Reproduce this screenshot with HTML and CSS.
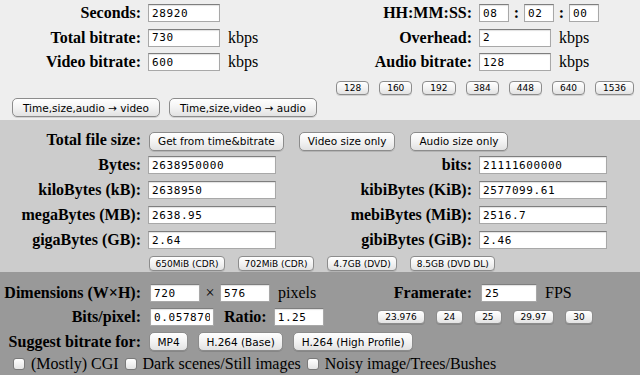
FILE: index.html
```html
<html>
    <link rel="stylesheet" href="styles.css">
    <head>
        <title>Bitrate calculator</title>
    </head>

    <body>
        <div class="sec sec-time">
            <label class="lbl" for="sec">Seconds:</label>
            <div class="cell"><input type="text" id="sec" class="in in-s" value="28920"></div>
            <label class="lbl" for="hh">HH:MM:SS:</label>
            <div class="cell">
                <input type="text" id="hh" class="in in-t" value="08">
                <span class="colon">:</span>
                <input type="text" id="mm" class="in in-t" value="02">
                <span class="colon">:</span>
                <input type="text" id="ss" class="in in-t" value="00">
            </div>

            <label class="lbl" for="total">Total bitrate:</label>
            <div class="cell"><input type="text" id="total" class="in in-s" value="730"><span class="unit">kbps</span></div>
            <label class="lbl" for="over">Overhead:</label>
            <div class="cell"><input type="text" id="over" class="in in-s" value="2"><span class="unit">kbps</span></div>

            <label class="lbl" for="video">Video bitrate:</label>
            <div class="cell"><input type="text" id="video" class="in in-s" value="600"><span class="unit">kbps</span></div>
            <label class="lbl" for="audio">Audio bitrate:</label>
            <div class="cell"><input type="text" id="audio" class="in in-s" value="128"><span class="unit">kbps</span></div>

            <div class="span2"></div>
            <div class="span2 presets">
                <button class="sbtn">128</button>
                <button class="sbtn">160</button>
                <button class="sbtn">192</button>
                <button class="sbtn">384</button>
                <button class="sbtn">448</button>
                <button class="sbtn">640</button>
                <button class="sbtn">1536</button>
            </div>

            <div class="span4 calc">
                <button class="btn wide">Time,size,audio &rarr; video</button>
                <button class="btn wide">Time,size,video &rarr; audio</button>
            </div>
        </div>

        <div class="sec sec-size">
            <div class="lbl">Total file size:</div>
            <div class="span3 getrow">
                <button class="btn">Get from time&amp;bitrate</button>
                <button class="btn">Video size only</button>
                <button class="btn">Audio size only</button>
            </div>

            <label class="lbl" for="b">Bytes:</label>
            <div class="cell"><input type="text" id="b" class="in in-l" value="2638950000"></div>
            <label class="lbl" for="bits">bits:</label>
            <div class="cell"><input type="text" id="bits" class="in in-l" value="21111600000"></div>

            <label class="lbl" for="kb">kiloBytes (kB):</label>
            <div class="cell"><input type="text" id="kb" class="in in-l" value="2638950"></div>
            <label class="lbl" for="kib">kibiBytes (KiB):</label>
            <div class="cell"><input type="text" id="kib" class="in in-l" value="2577099.61"></div>

            <label class="lbl" for="mb">megaBytes (MB):</label>
            <div class="cell"><input type="text" id="mb" class="in in-l" value="2638.95"></div>
            <label class="lbl" for="mib">mebiBytes (MiB):</label>
            <div class="cell"><input type="text" id="mib" class="in in-l" value="2516.7"></div>

            <label class="lbl" for="gb">gigaBytes (GB):</label>
            <div class="cell"><input type="text" id="gb" class="in in-l" value="2.64"></div>
            <label class="lbl" for="gib">gibiBytes (GiB):</label>
            <div class="cell"><input type="text" id="gib" class="in in-l" value="2.46"></div>

            <div></div>
            <div class="span3 media">
                <button class="sbtn tbtn">650MiB (CDR)</button>
                <button class="sbtn tbtn">702MiB (CDR)</button>
                <button class="sbtn tbtn">4.7GB (DVD)</button>
                <button class="sbtn tbtn">8.5GB (DVD DL)</button>
            </div>
        </div>

        <div class="sec sec-dim">
            <label class="lbl" for="w">Dimensions (W&times;H):</label>
            <div class="cell pad">
                <input type="text" id="w" class="in in-d" value="720">
                <span class="times">&times;</span>
                <input type="text" id="h" class="in in-d" value="576">
                <span class="unit">pixels</span>
            </div>
            <label class="lbl" for="fps">Framerate:</label>
            <div class="cell pad"><input type="text" id="fps" class="in in-f" value="25"><span class="unit">FPS</span></div>

            <label class="lbl" for="bpp">Bits/pixel:</label>
            <div class="cell pad">
                <input type="text" id="bpp" class="in in-b" value="0.05787037">
                <label class="lbl ratio" for="ratio">Ratio:</label>
                <input type="text" id="ratio" class="in in-d" value="1.25">
            </div>
            <div class="span2 fpsrow">
                <button class="sbtn">23.976</button>
                <button class="sbtn">24</button>
                <button class="sbtn">25</button>
                <button class="sbtn">29.97</button>
                <button class="sbtn">30</button>
            </div>

            <div class="lbl">Suggest bitrate for:</div>
            <div class="span3 suggest">
                <button class="btn">MP4</button>
                <button class="btn">H.264 (Base)</button>
                <button class="btn">H.264 (High Profile)</button>
            </div>

            <div class="span4 checks">
                <label class="chk"><input type="checkbox">(Mostly) CGI</label>
                <label class="chk"><input type="checkbox">Dark scenes/Still images</label>
                <label class="chk"><input type="checkbox">Noisy image/Trees/Bushes</label>
            </div>
        </div>
    </body>
</html>
```

FILE: styles.css
```css
body {
    margin: 0;
    background-color: white;
    color: black;
    font-family: "Liberation Serif", "Times New Roman", serif;
    font-size: 16px;
}

.sec {
    display: grid;
    grid-template-columns: 141px 175px 142px 1fr;
    column-gap: 7px;
    align-items: center;
    line-height: 18px;
}

.sec-time {
    background-color: #eeeeee;
    padding: 4px 0 3px 0;
    row-gap: 6.5px;
}

.sec-size {
    background-color: #cccccc;
    padding: 11px 0 1px 0;
    row-gap: 7px;
}

.sec-dim {
    background-color: #999999;
    padding: 12px 0 2px 0;
    row-gap: 6px;
}

.lbl {
    font-weight: bold;
    text-align: right;
    white-space: nowrap;
}

.cell {
    display: flex;
    align-items: center;
    white-space: nowrap;
}

.pad {
    padding-left: 2px;
}

.span2 {
    grid-column: span 2;
}

.span3 {
    grid-column: span 3;
}

.span4 {
    grid-column: span 4;
}

.in {
    box-sizing: border-box;
    height: 18px;
    margin: 0;
    padding: 0 3px;
    border: 1px solid #a8a8a8;
    border-top-color: #7e7e7e;
    box-shadow: inset 0 1px 1px rgba(0, 0, 0, 0.12);
    background-color: white;
    font-family: "DejaVu Sans Mono", monospace;
    font-size: 11px;
    letter-spacing: 0.6px;
    color: black;
}

.in-s { width: 72px; }
.in-t { width: 30px; }
.in-l { width: 128px; }
.in-d { width: 50px; }
.in-f { width: 56px; }
.in-b { width: 64px; }

.colon {
    font-weight: bold;
    width: 15px;
    text-align: center;
}

.unit {
    margin-left: 8px;
}

.times {
    width: 20px;
    text-align: center;
}

.ratio {
    margin: 0 7px 0 10px;
}

.btn {
    box-sizing: border-box;
    height: 19px;
    margin: 0;
    padding: 0 7.5px;
    border: 1px solid #8c8c8c;
    border-radius: 5px;
    background: linear-gradient(#ffffff, #f3f3f3 50%, #e2e2e2);
    box-shadow: 0 1px 0 rgba(0, 0, 0, 0.12);
    font-family: "DejaVu Sans", Verdana, sans-serif;
    font-size: 10.5px;
    color: black;
}

.wide {
    padding: 0 10px;
}

.sbtn {
    box-sizing: border-box;
    height: 14px;
    margin: 0;
    padding: 0 7px;
    border: 1px solid #8c8c8c;
    border-radius: 4px;
    background: linear-gradient(#ffffff, #f3f3f3 50%, #e2e2e2);
    box-shadow: 0 1px 0 rgba(0, 0, 0, 0.12);
    font-family: "DejaVu Sans", Verdana, sans-serif;
    font-size: 9px;
    line-height: 12px;
    color: black;
}

.tbtn {
    height: 15px;
    padding: 0 5.5px;
}

.presets {
    display: flex;
    justify-content: center;
    gap: 10px;
    margin-top: 3px;
    margin-bottom: -3px;
}

.calc {
    display: flex;
    gap: 9px;
    padding-left: 12px;
}

.getrow {
    display: flex;
    gap: 15px;
    padding-left: 1px;
    margin-bottom: -2px;
}

.getrow .btn {
    padding: 0 8px;
}

.media {
    display: flex;
    gap: 13px;
    padding-left: 1px;
}

.fpsrow {
    display: flex;
    justify-content: center;
    gap: 11px;
}

.suggest {
    display: flex;
    gap: 10px;
    padding-left: 1px;
}

.checks {
    display: flex;
    align-items: center;
    padding-left: 13px;
    margin-top: -2px;
}

.chk {
    display: flex;
    align-items: center;
    margin-right: 6px;
}

.chk input {
    -webkit-appearance: none;
    appearance: none;
    width: 12px;
    height: 12px;
    margin: 0 6px 0 0;
    border: 1px solid #7a7a7a;
    border-radius: 3px;
    background: linear-gradient(#ffffff, #e4e4e4);
}
```
